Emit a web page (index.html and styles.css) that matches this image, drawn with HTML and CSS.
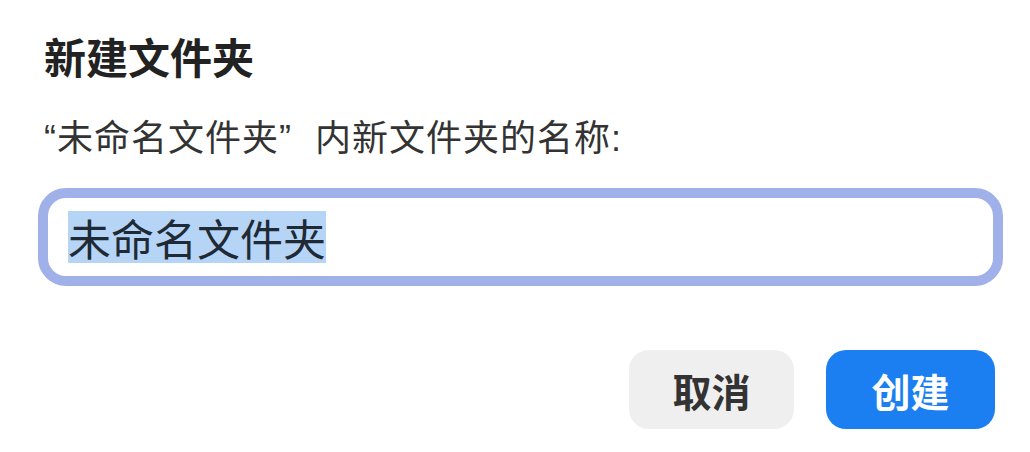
FILE: index.html
```html
<!DOCTYPE html>
<html lang="zh-CN">
<head>
  <meta charset="UTF-8" />
  <title>新建文件夹</title>
  <meta name="viewport" content="width=device-width, initial-scale=1.0" />
  <link rel="stylesheet" href="styles.css">
</head>
<body>

  <div class="dialog">
    <h1 class="dialog-title">新建文件夹</h1>
    <p class="dialog-label">“未命名文件夹”<span class="gap"></span>内新文件夹的名称:</p>

    <!-- name field, text shown selected -->
    <div class="name-field">
      <span class="name-text">未命名文件夹</span>
    </div>

    <div class="actions">
      <button class="btn btn-cancel">取消</button>
      <button class="btn btn-create">创建</button>
    </div>
  </div>

</body>
</html>
```

FILE: styles.css
```css
* { box-sizing: border-box; }
body {
  background: #fff;
  color: #222;
  font-family: "Noto Sans CJK SC", "Noto Sans", sans-serif;
  margin: 0; padding: 0;
}
.dialog {
  padding: 31px 35px 0 44px;
  display: flex;
  flex-direction: column;
}
.dialog-title {
  font-size: 42px;
  font-weight: 700;
  line-height: 50px;
  margin: 0;
  color: #222;
}
.dialog-label {
  font-family: "Liberation Sans", "Noto Sans CJK SC", sans-serif;
  font-size: 36px;
  line-height: 44px;
  letter-spacing: 1px;
  margin: 36px 0 0;
  color: #333;
}
.dialog-label .gap {
  display: inline-block;
  width: 23px;
}
.name-field {
  margin: 27px -8px 0 -6px;
  height: 98px;
  border: 10px solid #a0b0e8;
  border-radius: 28px;
  padding: 0 20px;
  display: flex;
  align-items: center;
}
.name-text {
  font-size: 43px;
  line-height: 52px;
  color: #1e2a36;
  background: #b6d5f6;
}
.actions {
  display: flex;
  justify-content: flex-end;
  gap: 32px;
  margin-top: 64px;
}
.btn {
  font-family: inherit;
  font-size: 39px;
  font-weight: 700;
  border: none;
  border-radius: 20px;
  height: 79px;
  padding: 0;
}
.btn-cancel {
  width: 165px;
  background: #efefef;
  color: #333;
}
.btn-create {
  width: 169px;
  background: #1b7ff1;
  color: #fff;
}
```
